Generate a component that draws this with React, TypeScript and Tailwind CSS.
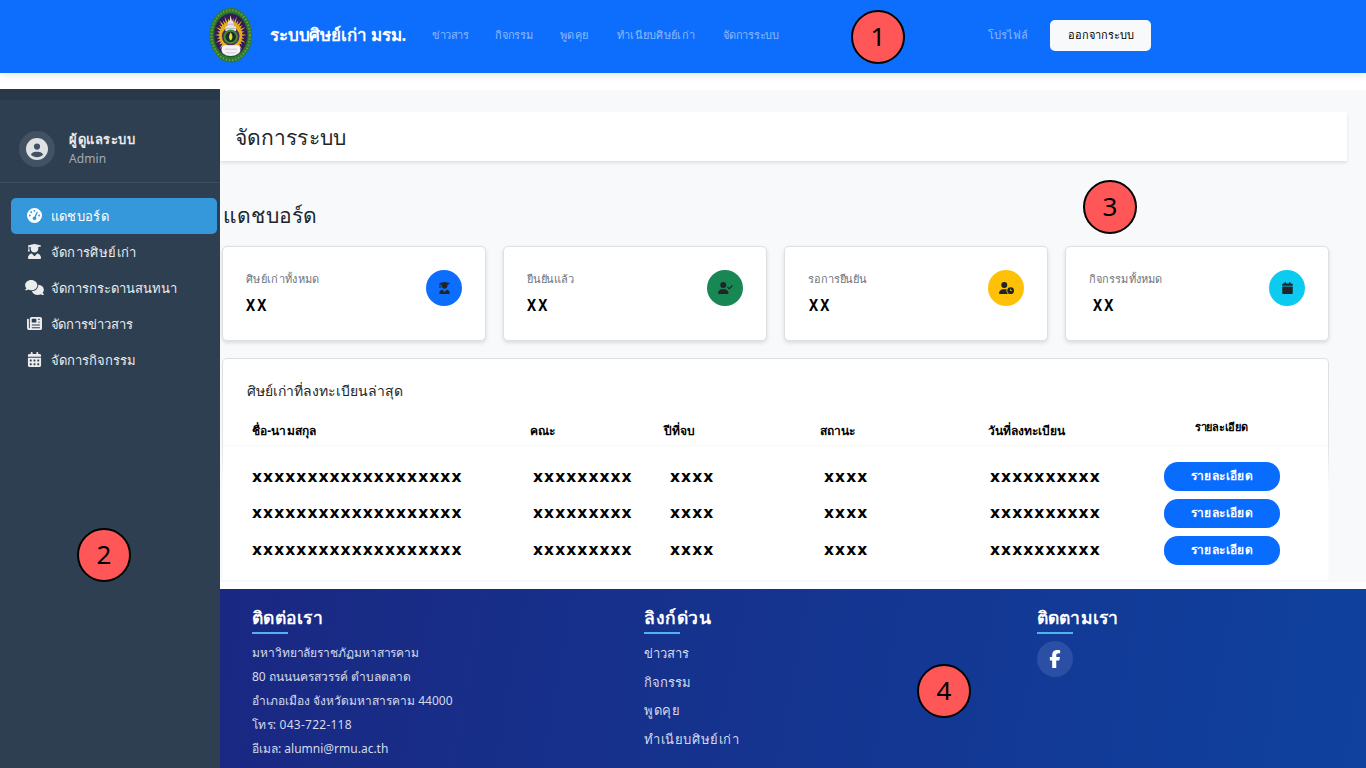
import React from "react";
import {
  FaCalendar,
  FaCalendarDays,
  FaCircleUser,
  FaComments,
  FaFacebookF,
  FaGaugeHigh,
  FaNewspaper,
  FaUserCheck,
  FaUserClock,
  FaUserGraduate,
} from "react-icons/fa6";

const navItems = [
  { label: "ข่าวสาร", cls: "w-[63px] tracking-[-0.5px]" },
  { label: "กิจกรรม", cls: "w-[65px] tracking-[-0.2px]" },
  { label: "พูดคุย", cls: "w-[57px] tracking-[0.3px]" },
  { label: "ทำเนียบศิษย์เก่า", cls: "w-[106px] tracking-[0.3px]" },
  { label: "จัดการระบบ", cls: "w-[60px] tracking-[-0.25px]" },
];

const sideItems = [
  { label: "แดชบอร์ด", icon: FaGaugeHigh, active: true, cls: "tracking-[0.4px]" },
  { label: "จัดการศิษย์เก่า", icon: FaUserGraduate, active: false, cls: "tracking-[0.4px]" },
  { label: "จัดการกระดานสนทนา", icon: FaComments, active: false, cls: "tracking-[0.05px]" },
  { label: "จัดการข่าวสาร", icon: FaNewspaper, active: false, cls: "tracking-[-0.05px]" },
  { label: "จัดการกิจกรรม", icon: FaCalendarDays, active: false, cls: "" },
];

const cards = [
  { label: "ศิษย์เก่าทั้งหมด", icon: FaUserGraduate, color: "bg-[#0d6efd]", pad: "", cls: "tracking-[0.35px]" },
  { label: "ยืนยันแล้ว", icon: FaUserCheck, color: "bg-[#198754]", pad: "", cls: "tracking-[-0.2px]" },
  { label: "รอการยืนยัน", icon: FaUserClock, color: "bg-[#ffc107]", pad: "pl-px", cls: "tracking-[-0.1px]" },
  { label: "กิจกรรมทั้งหมด", icon: FaCalendar, color: "bg-[#0dcaf0]", pad: "pl-[4px]", cls: "tracking-[0.1px]" },
];

const rows = ["pt-[2px]", "", ""];
const grid = "grid grid-cols-[281px_137px_154px_166px_170px_1fr]";

const rays = Array.from({ length: 32 }, (_, i) => {
  const a = (i / 32) * Math.PI * 2;
  const d = Math.PI / 40;
  const long = i % 2 === 0 ? 1 : 0.88;
  const pt = (ang: number, rx: number, ry: number) =>
    `${(21.7 + Math.cos(ang) * rx).toFixed(2)} ${(28 + Math.sin(ang) * ry).toFixed(2)}`;
  return `M${pt(a - d * 1.1, 10.5, 13)}L${pt(a, 16 * long, 20 * long)}L${pt(a + d * 1.1, 10.5, 13)}Z`;
}).join("");

function Badge({ n, place }: { n: number; place: string }) {
  return (
    <div
      className={`absolute z-10 flex size-[54px] items-center justify-center rounded-full border-2 border-black bg-[#ff5757] pb-[2px] font-['Noto_Sans','Open_Sans',sans-serif] text-[26px] leading-none text-black ${place}`}
    >
      {n}
    </div>
  );
}

function Seal() {
  return (
    <svg viewBox="0 0 44 56" className="h-[56px] w-[44px]">
      <ellipse cx="21.7" cy="28.2" rx="21.4" ry="27.4" fill="#2b7a34" />
      <ellipse cx="21.7" cy="28.2" rx="19.2" ry="25" fill="none" stroke="#7d9e33" strokeWidth="2" strokeDasharray="1.3 1.9" />
      <ellipse cx="21.7" cy="28" rx="16.8" ry="21.6" fill="#35175c" stroke="#1d5a2b" strokeWidth="1" />
      <path d={rays} fill="#eeb41f" />
      <ellipse cx="21.7" cy="28.4" rx="11.4" ry="13.6" fill="#e3ad1c" />
      <ellipse cx="21.7" cy="29.3" rx="8.8" ry="9.2" fill="#4b2a5c" />
      <path d="M21.7 8.5 L22.6 13 L24.6 15.5 V18.5 L27 20 V24 H16.4 V20 L18.8 18.5 V15.5 L20.8 13Z" fill="#e4e2ec" />
      <path d="M18.8 17.2H24.6M16.8 21.4H26.6" stroke="#a9a3bd" strokeWidth="0.7" />
      <circle cx="21.7" cy="29.8" r="6.2" fill="#1b2f2a" stroke="#3f8d35" strokeWidth="2" />
      <path d="M21.7 25.2 C23.7 28.4 24.2 31.4 21.7 33.4 C19.2 31.4 19.7 28.4 21.7 25.2Z" fill="#dfe02d" />
      <path d="M13 40 Q14 37.6 17.5 38.2 H26 Q29.8 37.6 31 40 Q32.6 44.5 29.5 46.4 Q26 49 21.7 49 Q17 49 14 46.4 Q11.4 44 13 40Z" fill="#f4f1f7" />
      <path d="M15.8 42.2H28M17 45.8H26.6" stroke="#c5b3c6" strokeWidth="0.7" />
    </svg>
  );
}

function FooterHead({ children, cls }: { children: React.ReactNode; cls: string }) {
  return (
    <>
      <h3 className={`h-[26px] text-[17.5px] font-bold leading-[26px] text-white ${cls}`}>{children}</h3>
      <div className="mt-[2px] h-[2px] w-9 bg-[#4fb3f0]" />
    </>
  );
}

export default function App() {
  return (
    <div className="relative flex h-[768px] w-[1366px] flex-col overflow-hidden whitespace-nowrap bg-white font-['Noto_Sans','Open_Sans',sans-serif] text-[#212529]">
      <header className="relative flex h-[73px] shrink-0 items-center bg-[#0d6efd] pb-[3px] pl-[209px] shadow-[0_2px_8px_rgba(0,0,0,0.1)]">
        <Seal />
        <div className="ml-[17px] w-[162px] text-[17px] font-bold tracking-[-0.13px] text-white">ระบบศิษย์เก่า มรม.</div>
        <nav className="flex text-[11px] text-[#8bb9fe]">
          {navItems.map((n) => (
            <a key={n.label} className={n.cls}>{n.label}</a>
          ))}
        </nav>
        <a className="ml-[205px] w-[62px] text-[11px] text-[#8bb9fe]">โปรไฟล์</a>
        <button className="h-[31px] w-[101px] rounded-[5px] bg-[#f8f9fa] text-[11px] font-medium text-black">ออกจากระบบ</button>
      </header>

      <div className="mt-4 flex min-h-0 flex-1">
        <aside className="w-[220px] shrink-0 bg-[#2e3f51]">
          <div className="h-[11px] bg-[#293949]" />
          <div className="flex h-[83px] items-center border-b border-[#3e4e5f] pl-[19px] pt-[15px]">
            <div className="flex size-[36px] items-center justify-center rounded-full bg-[#435262]">
              <FaCircleUser className="size-[22px] text-[#dfe2e5]" />
            </div>
            <div className="ml-[14px]">
              <div className="h-[20px] text-[13px] font-semibold leading-[18px] tracking-[0.5px] text-[#e8eaec]">ผู้ดูแลระบบ</div>
              <div className="h-[18px] text-[12px] leading-[18px] tracking-[0.1px] text-[#a3abb3]">Admin</div>
            </div>
          </div>
          <ul className="ml-[10.5px] mt-[14.5px] w-[206.5px]">
            {sideItems.map((s) => (
              <li
                key={s.label}
                className={`flex h-9 items-center rounded-[5px] text-[13px] font-medium ${s.active ? "bg-[#3498db] text-white" : "text-[#eaecee]"}`}
              >
                <span className="ml-[14px] flex w-5 justify-center">
                  <s.icon className="h-[15px] w-[19px]" />
                </span>
                <span className={`ml-[6px] pt-[2px] ${s.cls}`}>{s.label}</span>
              </li>
            ))}
          </ul>
        </aside>

        <main className="flex min-w-0 flex-1 flex-col">
          <div className="mt-px h-[492px] shrink-0 bg-[#f8f9fb] pt-[22px]">
            <div className="flex h-[49px] w-[1127px] items-center bg-white pl-[15px] pt-[2px] text-[21px] font-medium tracking-[0.1px] shadow-[0_2px_3px_rgba(0,0,0,0.1)]">
              จัดการระบบ
            </div>
            <h2 className="ml-[3px] mt-[36px] h-[37px] text-[21px] font-medium leading-[37px] tracking-[0.2px]">แดชบอร์ด</h2>
            <div className="ml-[2px] mt-[12px] flex gap-[17px]">
              {cards.map((c) => (
                <div key={c.label} className="flex h-[95px] w-[264px] rounded-[5px] border border-[#dddfe1] bg-white shadow-[0_2px_4px_rgba(0,0,0,0.12)]">
                  <div className="ml-[23px] mt-[22px] w-[179.5px]">
                    <div className={`h-5 text-[11px] leading-5 text-[#6c757d] ${c.cls}`}>{c.label}</div>
                    <div className={`mt-[4px] h-6 ${c.pad}`}>
                      <div className="origin-left scale-x-85 text-[16px] font-bold leading-6 tracking-[2.5px] text-black">XX</div>
                    </div>
                  </div>
                  <div className={`mt-[22.5px] flex size-[36.5px] items-center justify-center rounded-full pl-px ${c.color}`}>
                    <c.icon className="h-3 w-[15px]" />
                  </div>
                </div>
              ))}
            </div>
            <section className="ml-[2px] mt-[17px] h-[222px] w-[1107px] rounded-t-[5px] bg-linear-[180deg,#dddfe1_0px,#e2e4e6_90px,#fbfcfc_130px,#fbfcfc] px-px pt-px">
              <div className="h-full rounded-t-[4px] bg-white pt-px">
                <h3 className="ml-[23.5px] mt-[20px] h-[22px] text-[14px] leading-[22px]">ศิษย์เก่าที่ลงทะเบียนล่าสุด</h3>
                <div className={`mt-[17px] h-[27px] border-b border-[#f8f8f9] pl-[29px] text-[12px] font-bold leading-[24px] text-black ${grid}`}>
                  <span className="tracking-[0.15px]">ชื่อ-นามสกุล</span>
                  <span className="-ml-[3px]">คณะ</span>
                  <span className="-ml-[6px]">ปีที่จบ</span>
                  <span className="-ml-[4px]">สถานะ</span>
                  <span className="-ml-[2px]">วันที่ลงทะเบียน</span>
                  <span className="-mt-[4px] ml-[35px] text-[11px] tracking-[-0.3px]">รายละเอียด</span>
                </div>
                <div className="pt-[12px]">
                  {rows.map((shift, i) => (
                    <div key={i} className={`h-[37px] ${grid} items-center pl-[29px] font-['DejaVu_Sans',sans-serif] text-[15.5px] font-bold tracking-[1.08px] text-black`}>
                      <span className={shift}>xxxxxxxxxxxxxxxxxxx</span>
                      <span className={shift}>xxxxxxxxx</span>
                      <span className={shift}>xxxx</span>
                      <span className={shift}>xxxx</span>
                      <span className={shift}>xxxxxxxxxx</span>
                      <button className="ml-[4px] h-[29px] w-[116px] rounded-[14px] bg-[#086dff] pb-[2px] font-['Noto_Sans',sans-serif] text-[12px] font-bold tracking-[0.4px] text-white">รายละเอียด</button>
                    </div>
                  ))}
                </div>
              </div>
            </section>
          </div>
          <footer className="mt-[7px] flex flex-1 bg-linear-[100deg,#1a2882,#0f419e] pl-[32px] pt-[15px] text-[12px] text-[#d4d9eb]">
            <div className="w-[392px]">
              <FooterHead cls="tracking-[0.25px]">ติดต่อเรา</FooterHead>
              <div className="mt-[7px] leading-[24.1px]">
                <p className="tracking-[-0.08px]">มหาวิทยาลัยราชภัฏมหาสารคาม</p>
                <p>80 ถนนนครสวรรค์ ตำบลตลาด</p>
                <p>อำเภอเมือง จังหวัดมหาสารคาม 44000</p>
                <p className="tracking-[0.25px]">โทร: 043-722-118</p>
                <p>อีเมล: alumni@rmu.ac.th</p>
              </div>
            </div>
            <div className="w-[393px]">
              <FooterHead cls="tracking-[0.5px]">ลิงก์ด่วน</FooterHead>
              <div className="mt-[5px] text-[13px] leading-[28.6px]">
                <p className="tracking-[-0.1px]">ข่าวสาร</p>
                <p className="tracking-[-0.1px]">กิจกรรม</p>
                <p className="tracking-[0.5px]">พูดคุย</p>
                <p className="tracking-[0.6px]">ทำเนียบศิษย์เก่า</p>
              </div>
            </div>
            <div>
              <FooterHead cls="tracking-[0.15px]">ติดตามเรา</FooterHead>
              <div className="mt-[7px] flex size-9 items-center justify-center rounded-full bg-[#2a4fa4] text-white">
                <FaFacebookF className="size-[18px]" />
              </div>
            </div>
          </footer>
        </main>
      </div>

      <Badge n={1} place="left-[851px] top-[10px]" />
      <Badge n={2} place="left-[77px] top-[528px]" />
      <Badge n={3} place="left-[1083px] top-[180px]" />
      <Badge n={4} place="left-[917px] top-[664px]" />
    </div>
  );
}
